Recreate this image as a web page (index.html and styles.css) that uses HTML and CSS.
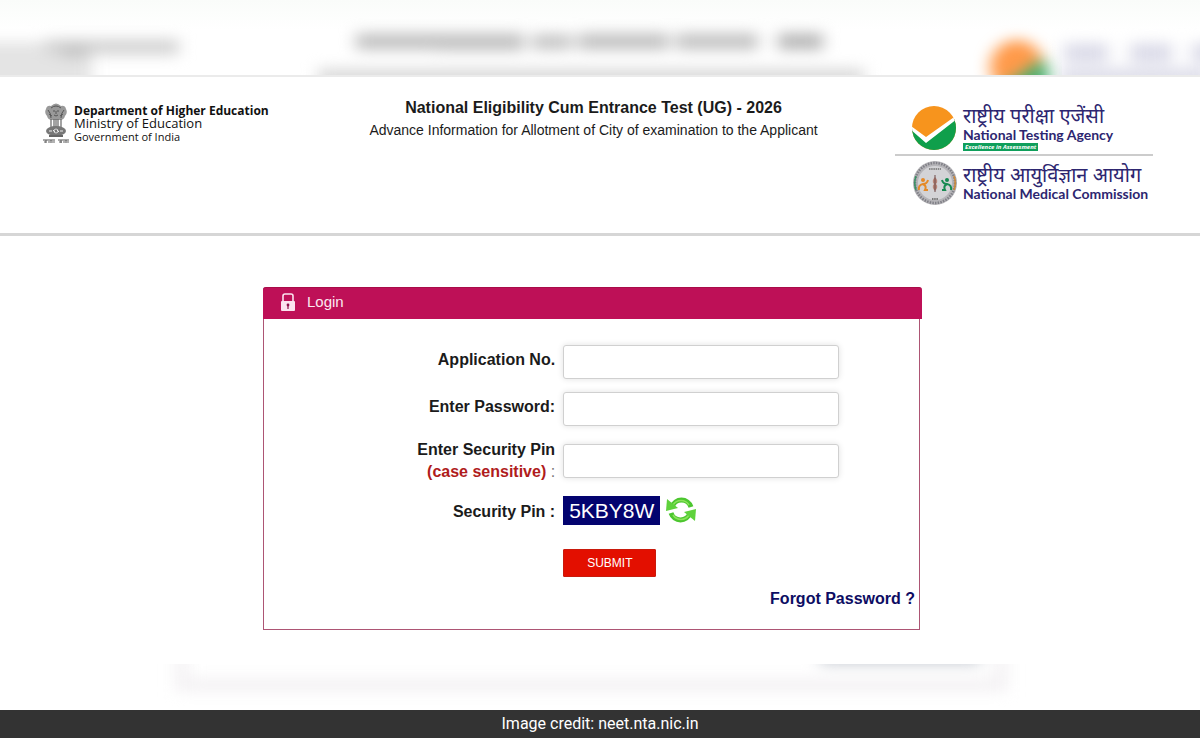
FILE: index.html
```
<!DOCTYPE html>
<html lang="en">
<head>
    <meta charset="UTF-8">
    <meta name="viewport" content="width=device-width, initial-scale=1.0">
    <title>NEET (UG) - 2026 Login</title>
    <link rel="stylesheet" href="styles.css">
</head>
<body>
    <svg class="backdrop backdrop-top" viewBox="0 0 1200 75" preserveAspectRatio="xMidYMax slice" aria-hidden="true">
        <defs>
            <filter id="soft" x="-20%" y="-80%" width="140%" height="260%" color-interpolation-filters="sRGB">
                <feGaussianBlur stdDeviation="8 7"/>
            </filter>
            <linearGradient id="topFade" x1="0" y1="0" x2="0" y2="1">
                <stop offset="0" stop-color="#fafcfa"/>
                <stop offset="0.4" stop-color="#fff"/>
            </linearGradient>
        </defs>
        <rect width="1200" height="75" fill="url(#topFade)"/>
        <g filter="url(#soft)">
            <path d="M-30 42H60V54H92V90H-30z" fill="#e4e4e4"/>
            <rect x="45" y="39" width="134" height="16" fill="#d4d4d4"/>
            <rect x="62" y="44" width="26" height="14" fill="#c6c6c6"/>
            <rect x="356" y="33" width="80" height="17" fill="#c2c2c2"/>
            <rect x="436" y="33" width="88" height="18" fill="#c2c2c2"/>
            <rect x="532" y="34" width="40" height="16" fill="#c6c6c6"/>
            <rect x="578" y="33" width="91" height="17" fill="#c2c2c2"/>
            <rect x="676" y="33" width="82" height="17" fill="#c4c4c4"/>
            <rect x="778" y="33" width="45" height="17" fill="#b8b8b8"/>
            <rect x="318" y="68" width="546" height="20" fill="#dcdcdc"/>
            <rect x="1064" y="43" width="44" height="20" fill="#dcdce9"/>
            <rect x="1130" y="43" width="42" height="20" fill="#dcdce9"/>
            <rect x="1192" y="43" width="30" height="20" fill="#dcdce9"/>
            <rect x="1060" y="68" width="150" height="18" fill="#dedeea"/>
        </g>
        <g filter="url(#soft)">
            <circle cx="1017" cy="67" r="27" fill="#ff9a4a"/>
            <path d="M986 98l58-40q8 12 3 40z" fill="#4bb070"/>
        </g>
    </svg>

    <header class="site-header">
        <div class="dept">
            <svg class="emblem" viewBox="0 0 26 42" aria-hidden="true">
                <path d="M8 4q5-5 10 0 4-1 5 3 2 4-1 7-1 4-5 4H9q-4 0-5-4-3-3-1-7 1-4 5-3z" fill="#999"/>
                <path d="M8 6q5-4 10 0M5 8q3 3 3 8M21 8q-3 3-3 8M10 9h2M14 9h2M11 13q2 2 4 0M13 9v3M6 12l3 2M20 12l-3 2" fill="none" stroke="#555" stroke-width="1"/>
                <path d="M8 17v9M11 17v9M15 17v9M18 17v9M13 17v9" stroke="#666" stroke-width="1.2"/>
                <ellipse cx="13" cy="29" rx="10" ry="5" fill="#777"/>
                <path d="M6 29h3M10 28l2 2M17 29h3M14 28l2 2" stroke="#eee"/>
                <circle cx="13" cy="29" r="2" fill="none" stroke="#eee" stroke-width=".8"/>
                <path d="M6 34h14" stroke="#666" stroke-width="2"/>
                <path d="M0 38h12M15 38h11" stroke="#555" stroke-width="1"/>
                <path d="M1 40h2M5 40h2M9 40h3M16 40h3M20 40h2M24 40h2M3 38v3M8 38v3M18 38v3M23 38v3" stroke="#666" stroke-width="1.2"/>
            </svg>
            <div class="dept-text">
                <strong>Department of Higher Education</strong>
                <span class="ministry">Ministry of Education</span>
                <span class="govt">Government of India</span>
            </div>
        </div>

        <div class="title">
            <h1>National Eligibility Cum Entrance Test (UG) - 2026</h1>
            <p>Advance Information for Allotment of City of examination to the Applicant</p>
        </div>

        <div class="logos">
            <div class="logo">
                <svg class="logo-mark" viewBox="0 0 46 46" aria-hidden="true">
                    <defs>
                        <clipPath id="disc"><circle cx="23" cy="23" r="22"/></clipPath>
                    </defs>
                    <g clip-path="url(#disc)">
                        <rect width="46" height="46" fill="#f7941d"/>
                        <path d="M0 23l15 13 31-24v35H0z" fill="#0f9f4b"/>
                        <path d="M0 21l15 11L46 10v4L15 38 0 25z" fill="#fff"/>
                    </g>
                </svg>
                <div class="logo-text">
                    <span class="hindi" lang="hi">राष्ट्रीय परीक्षा एजेंसी</span>
                    <span class="english">National Testing Agency</span>
                    <em class="motto">Excellence in Assessment</em>
                </div>
            </div>
            <div class="logo">
                <svg class="logo-mark" viewBox="0 0 46 46" aria-hidden="true">
                    <circle cx="24" cy="23" r="22" fill="#b5b4b8"/>
                    <circle cx="24" cy="23" r="20" fill="none" stroke="#808087" stroke-width="2.5" stroke-dasharray="1.5 1.2"/>
                    <circle cx="24" cy="23" r="17" fill="#d3d3d6"/>
                    <path d="M5 16a21 21 0 0 0 0 14" fill="none" stroke="#389264" stroke-width="1.5"/>
                    <path d="M43 16a21 21 0 0 1 0 14" fill="none" stroke="#d08a38" stroke-width="1.5"/>
                    <path d="M18 9h12" stroke="#888" stroke-width="2" stroke-dasharray="1.5 .7"/>
                    <path d="M21 39h6" stroke="#777" stroke-width="2" stroke-dasharray="1.5 .7"/>
                    <circle cx="12" cy="20" r="2" fill="#e58a28"/>
                    <path d="M8 30q-1-5 4-6 4 0 5-4M12 24q4 2 2 6h3" fill="none" stroke="#e58a28" stroke-width="2"/>
                    <circle cx="36" cy="20" r="2" fill="#168a50"/>
                    <path d="M40 30q1-5-4-6-4 0-5-4M36 24q-4 2-2 6h-3" fill="none" stroke="#168a50" stroke-width="2"/>
                    <path d="M24 17q4 4 1 7 3 3-1 7-4-4-1-7-3-3 1-7z" fill="#b88578"/>
                    <path d="M24 15v17" stroke="#6d4848"/>
                </svg>
                <div class="logo-text">
                    <span class="hindi" lang="hi">राष्ट्रीय आयुर्विज्ञान आयोग</span>
                    <span class="english">National Medical Commission</span>
                </div>
            </div>
        </div>
    </header>

    <main>
        <section class="panel">
            <h2 class="panel-title">
                <svg class="lock" viewBox="0 0 14 18" aria-hidden="true">
                    <path d="M2 9V3q0-2 2-2h6q2 0 2 2v6" fill="none" stroke="#fbe3ef" stroke-width="1.6"/>
                    <rect x="0" y="8" width="14" height="10" rx="1" fill="#fbe3ef"/>
                    <path d="M7 11v5" stroke="#8d1049" stroke-width="1.2"/>
                    <circle cx="7" cy="12" r="1.4" fill="#8d1049"/>
                </svg>
                Login
            </h2>
            <form class="login-form" action="#" method="post">
                <label for="appno">Application No.</label>
                <input type="text" id="appno" name="appno">

                <label for="password">Enter Password:</label>
                <input type="password" id="password" name="password">

                <label for="pin" class="two-line">Enter Security Pin <br><span class="note">(case sensitive)</span> <span class="colon">:</span></label>
                <input type="text" id="pin" name="pin">

                <span class="pin-label">Security Pin :</span>
                <div class="captcha">
                    <span class="captcha-code">5KBY8W</span>
                    <button type="button" class="refresh" aria-label="Refresh security pin">
                        <svg viewBox="0 0 30 30" aria-hidden="true">
                            <path d="M6 12A10 10 0 0 1 25 12" fill="none" stroke="#4cc62f" stroke-width="5"/>
                            <path d="M7 10A9.500 9.500 0 0 1 23 10" fill="none" stroke="#8be35a" stroke-width="1.5"/>
                            <path d="M1 4l11 9-12 3z" fill="#5fd23c"/>
                            <path d="M24 18A10 10 0 0 1 5 18" fill="none" stroke="#4cc62f" stroke-width="5"/>
                            <path d="M23 20A9.500 9.500 0 0 1 7 20" fill="none" stroke="#8be35a" stroke-width="1.5"/>
                            <path d="M29 26L18 17l12-3z" fill="#5fd23c"/>
                        </svg>
                    </button>
                </div>

                <button type="submit" class="submit">SUBMIT</button>
            </form>
            <a class="forgot" href="#">Forgot Password ?</a>
        </section>
    </main>

    <svg class="backdrop backdrop-bottom" viewBox="0 0 1200 46" preserveAspectRatio="xMidYMax slice" aria-hidden="true">
        <g filter="url(#soft)">
            <path d="M182-30V21H1001V-30" fill="none" stroke="#f4f2f4" stroke-width="14"/>
            <rect x="820" y="-14" width="160" height="14" fill="#c4c8d0"/>
        </g>
    </svg>

    <footer class="credit">Image credit: neet.nta.nic.in</footer>
</body>
</html>
```
FILE: styles.css
```
* {
    box-sizing: border-box;
}
body {
    margin: 0;
    min-height: 100vh;
    display: flex;
    flex-direction: column;
    font-family: "Liberation Sans", Arial, sans-serif;
    font-size: 16px;
    color: #1b1b1b;
    background: #fff;
}

/* blurred strips above and below the page */
.backdrop {
    display: block;
    width: 100%;
    flex-shrink: 0;
}
.backdrop-top {
    height: 75px;
}
.backdrop-bottom {
    height: 46px;
    margin-top: auto;
}

/* header */
.site-header {
    display: grid;
    grid-template-columns: 1fr auto 1fr;
    align-items: start;
    min-height: 161px;
    padding: 0 47px 0 34px;
    border-top: 2px solid #ebebeb;
    border-bottom: 3px solid #d6d6d6;
}
.dept {
    display: flex;
    gap: 5px;
    padding: 25px 0 0 9px;
}
.emblem {
    width: 26px;
    height: 42px;
}
.dept-text {
    display: flex;
    flex-direction: column;
    padding-top: 2px;
    font-family: "Open Sans", "Noto Sans", sans-serif;
    font-size: 12px;
    line-height: 13px;
    color: #111;
}
.dept-text .ministry {
    font-size: 13px;
}
.dept-text .govt {
    font-size: 11px;
}
.title {
    padding-top: 21px;
    text-align: center;
}
.title h1 {
    margin: 0;
    font-size: 16px;
    line-height: 20px;
}
.title p {
    margin: 0;
    font-size: 14px;
    line-height: 24px;
}
.logos {
    justify-self: end;
    width: 258px;
    padding-top: 25px;
}
.logo {
    display: flex;
    align-items: center;
    gap: 6px;
    height: 54px;
    padding-left: 16px;
}
.logo:first-child {
    border-bottom: 2px solid #ccc;
}
.logo-mark {
    width: 46px;
    height: 46px;
}
.logo-text {
    display: flex;
    flex-direction: column;
    align-items: flex-start;
    color: #2d2670;
    white-space: nowrap;
}
.hindi {
    font-family: "Noto Sans", "Noto Sans Devanagari", sans-serif;
    font-size: 20px;
    line-height: 22px;
}
.english {
    font-family: Lato, sans-serif;
    font-size: 14px;
    font-weight: 700;
    line-height: 16px;
}
.motto {
    padding: 0 2px;
    background: #0f9f5b;
    color: #fff;
    font-family: "Open Sans", sans-serif;
    font-size: 6px;
    font-weight: 700;
    line-height: 8px;
}

/* login panel */
main {
    padding: 51px 17px 0 0;
}
.panel {
    max-width: 657px;
    margin: 0 auto;
    padding-bottom: 20px;
    border: 1px solid #ad5574;
    border-top: 0;
    border-radius: 3px 3px 0 0;
}
.panel-title {
    display: flex;
    align-items: center;
    gap: 12px;
    height: 32px;
    margin: 0 -3px 0 -1px;
    padding: 0 18px 4px;
    border-top: 1px solid #a90d49;
    border-radius: 3px 3px 0 0;
    background: #be1057;
    color: #fbe9f1;
    font-size: 15px;
    font-weight: 400;
}
.lock {
    width: 14px;
    height: 18px;
}
.login-form {
    display: grid;
    grid-template-columns: 9fr 11fr;
    align-items: center;
    gap: 13px 8px;
    padding-top: 26px;
}
.login-form label,
.pin-label {
    text-align: right;
    font-weight: 700;
    padding-bottom: 5px;
}
.login-form .two-line {
    padding: 0;
    line-height: 22px;
}
.login-form .pin-label {
    padding: 4px 0 0;
}
.note {
    color: #b01c1c;
}
.colon {
    font-weight: 400;
    color: #777;
}
.login-form input {
    width: 100%;
    max-width: 276px;
    height: 34px;
    padding: 4px 8px;
    border: 1px solid #d0d0d0;
    border-radius: 3px;
    box-shadow: 0 0 6px rgba(0, 0, 0, 0.12);
    background: #fff;
    font-size: 16px;
}
.captcha {
    display: flex;
    align-items: center;
    gap: 6px;
    height: 28px;
}
.captcha-code {
    padding: 0 6px;
    background: #03036f;
    color: #fff;
    font-size: 21px;
    line-height: 29px;
}
.refresh {
    padding: 0;
    border: 0;
    background: none;
    cursor: pointer;
}
.refresh svg {
    display: block;
    width: 30px;
    height: 30px;
}
.submit {
    grid-column: 2;
    justify-self: start;
    height: 28px;
    margin-top: 12px;
    padding: 0 23px;
    border: 1px solid #c91a0c;
    border-radius: 1px;
    background: #e30f00;
    color: #fff;
    font-family: inherit;
    font-size: 12px;
    cursor: pointer;
}
.forgot {
    display: block;
    margin: 12px 4px 0 0;
    text-align: right;
    line-height: 20px;
    font-weight: 700;
    color: #0d0d63;
    text-decoration: none;
}

.credit {
    background: #333;
    color: #fff;
    font-family: Roboto, sans-serif;
    font-size: 16px;
    line-height: 28px;
    text-align: center;
}
```
